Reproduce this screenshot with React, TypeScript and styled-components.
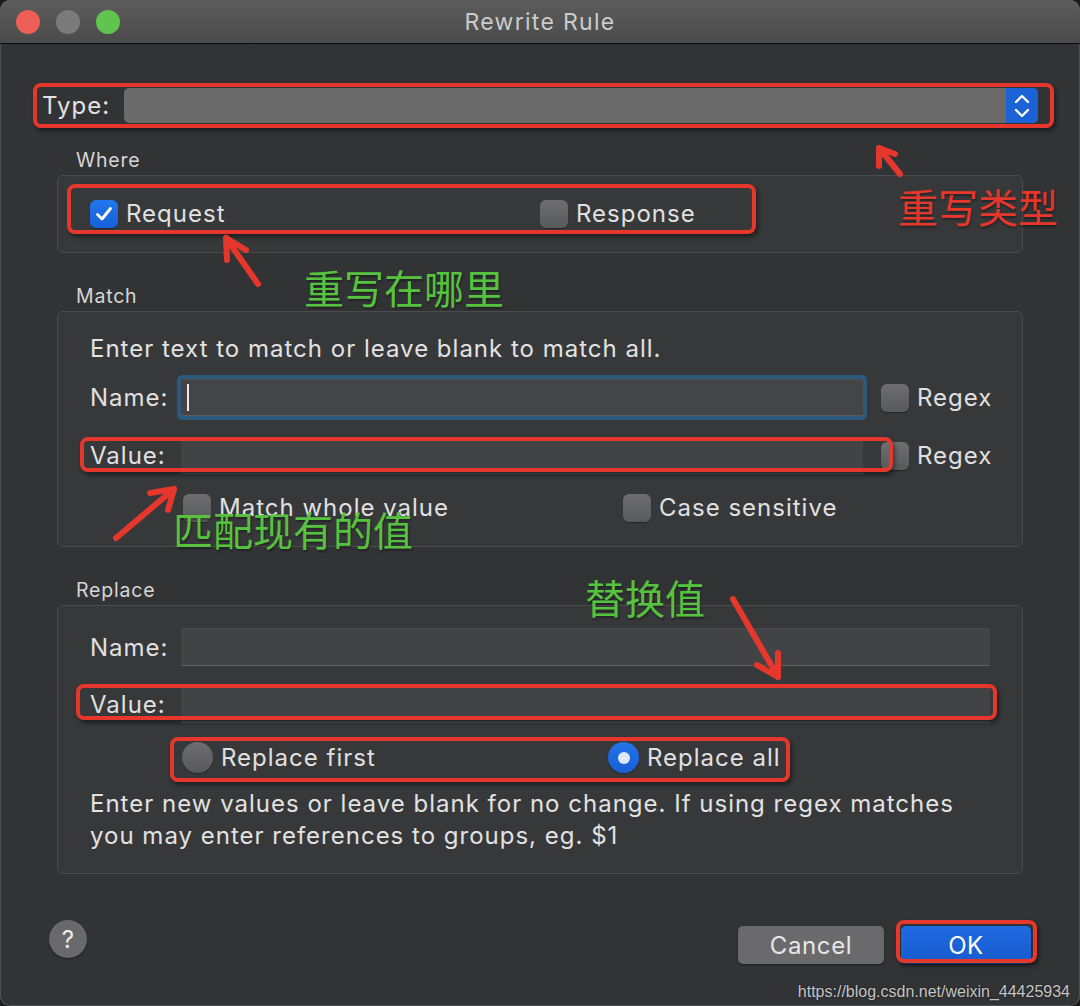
import React from "react";
import styled, { createGlobalStyle } from "styled-components";

const UI_FONT = `Inter, "Noto Sans", "Liberation Sans", sans-serif`;
const CJK_FONT = `"Noto Sans CJK SC", "Noto Sans", sans-serif`;

const GlobalStyle = createGlobalStyle`
  html, body { margin: 0; padding: 0; background: #1b1b1c; }
  #root { width: 1080px; height: 1006px; }
  *, *::before, *::after { box-sizing: border-box; }
`;

const Window = styled.div`
  position: relative;
  width: 1080px;
  height: 1006px;
  background: #323335;
  border-radius: 10px;
  overflow: hidden;
  display: flex;
  flex-direction: column;
  font-family: ${UI_FONT};
  letter-spacing: 1px;
  color: #dedede;
  box-shadow: inset 0 0 0 1px #505052;
`;

const TitleBar = styled.div`
  flex: none;
  height: 44px;
  display: grid;
  grid-template-columns: 1fr auto 1fr;
  align-items: center;
  padding: 0 16px;
  background: linear-gradient(#5c5c5c, #4b4b4b);
  border-bottom: 1px solid #0e0e0e;
`;

const Lights = styled.div`
  display: flex;
  gap: 16px;
`;

const Light = styled.span<{ $c: string }>`
  width: 24px;
  height: 24px;
  border-radius: 50%;
  background: ${(p) => p.$c};
`;

const Title = styled.div`
  font-size: 23px;
  letter-spacing: 1.3px;
  color: #cbcbcb;
`;

const Content = styled.div`
  flex: 1;
  display: flex;
  flex-direction: column;
  padding: 44px 42px 0;
`;

const TypeRow = styled.div`
  display: flex;
  align-items: center;
  height: 35px;
`;

const TypeLabel = styled.div`
  width: 82px;
  font-size: 24px;
  color: #e2e2e2;
`;

const Select = styled.div`
  flex: 1;
  height: 35px;
  border-radius: 5px;
  background: #6a6a6b;
  display: flex;
  justify-content: flex-end;
  overflow: hidden;
`;

const Stepper = styled.div`
  width: 32px;
  height: 100%;
  background: #1b62d6;
  display: flex;
  align-items: center;
  justify-content: center;
`;

const GroupTitle = styled.div<{ $mt: number }>`
  margin: ${(p) => p.$mt}px 0 4px 34px;
  font-size: 19.5px;
  letter-spacing: 0.8px;
  line-height: 22px;
  color: #d6d6d6;
`;

const GroupBox = styled.div<{ $pt: number; $pb: number }>`
  margin: 0 15px;
  padding: ${(p) => p.$pt}px 32px ${(p) => p.$pb}px;
  background: #37383a;
  border: 1px solid #4b4c4e;
  border-radius: 6px;
  display: flex;
  flex-direction: column;
`;

const OptionRow = styled.div<{ $indent?: number; $mt?: number }>`
  display: flex;
  align-items: center;
  padding-left: ${(p) => p.$indent ?? 0}px;
  margin-top: ${(p) => p.$mt ?? 0}px;
`;

const Option = styled.label<{ $w?: number }>`
  display: flex;
  align-items: center;
  gap: 8px;
  flex: none;
  width: ${(p) => (p.$w ? `${p.$w}px` : "auto")};
  font-size: 24px;
  line-height: 28px;
  color: #e0e0e0;
`;

const Box = styled.span<{ $checked?: boolean }>`
  width: 28px;
  height: 28px;
  flex: none;
  border-radius: 6px;
  display: flex;
  align-items: center;
  justify-content: center;
  background: ${(p) =>
    p.$checked ? "linear-gradient(#2277ee, #1760d6)" : "linear-gradient(#6e6e70, #58595b)"};
  box-shadow: 0 1px 1px rgba(0, 0, 0, 0.35);
`;

const Radio = styled.span<{ $checked?: boolean }>`
  width: 31px;
  height: 31px;
  flex: none;
  border-radius: 50%;
  display: flex;
  align-items: center;
  justify-content: center;
  background: ${(p) =>
    p.$checked ? "linear-gradient(#2273ea, #1760d6)" : "linear-gradient(#6e6e70, #58595b)"};
  box-shadow: 0 1px 1px rgba(0, 0, 0, 0.35);
`;

const Dot = styled.span`
  width: 12px;
  height: 12px;
  border-radius: 50%;
  background: #dfe8fb;
`;

const Hint = styled.div`
  font-size: 24px;
  line-height: 28px;
  color: #e2e2e2;
`;

const Fields = styled.div<{ $mt: number; $gap: number }>`
  display: flex;
  flex-direction: column;
  gap: ${(p) => p.$gap}px;
  margin-top: ${(p) => p.$mt}px;
`;

const FieldRow = styled.div`
  display: flex;
  align-items: center;
`;

const FieldLabel = styled.div`
  width: 91px;
  flex: none;
  font-size: 24px;
  color: #e0e0e0;
`;

const Input = styled.div<{ $h: number; $focused?: boolean }>`
  flex: 1;
  height: ${(p) => p.$h}px;
  display: flex;
  align-items: center;
  background: #424345;
  border-top: 1px solid #4a4b4d;
  border-bottom: 1px solid #5b5c5e;
  ${(p) =>
    p.$focused
      ? `box-shadow: 0 0 0 4px #2c5a7c; border-radius: 2px; background: #444547;`
      : ""}
`;

const Caret = styled.span`
  width: 2px;
  height: 27px;
  margin-left: 6px;
  background: #e8e8e8;
`;

const RegexOption = styled(Option)`
  width: 109px;
  margin-left: 18px;
`;

const Description = styled.div`
  margin-top: 15px;
  font-size: 24px;
  line-height: 32px;
  color: #e2e2e2;
  white-space: nowrap;
`;

const Footer = styled.div`
  display: flex;
  justify-content: space-between;
  align-items: flex-start;
  margin-top: 46px;
  padding: 0 7px;
`;

const HelpButton = styled.div`
  width: 38px;
  height: 38px;
  border-radius: 50%;
  background: #69696b;
  display: flex;
  align-items: center;
  justify-content: center;
  font-size: 24px;
  letter-spacing: 0;
  color: #ececec;
  box-shadow: 0 1px 2px rgba(0, 0, 0, 0.4);
`;

const Buttons = styled.div`
  display: flex;
  gap: 17px;
  margin-top: 6px;
`;

const Button = styled.div<{ $primary?: boolean }>`
  height: 38px;
  width: ${(p) => (p.$primary ? 130 : 146)}px;
  border-radius: 5px;
  display: flex;
  align-items: center;
  justify-content: center;
  font-size: 24px;
  letter-spacing: 0.6px;
  color: ${(p) => (p.$primary ? "#ffffff" : "#e6e6e6")};
  background: ${(p) => (p.$primary ? "linear-gradient(#1f6ae2, #175bcc)" : "#6a6a6c")};
  box-shadow: 0 1px 2px rgba(0, 0, 0, 0.45);
`;

const Watermark = styled.div`
  position: absolute;
  right: 10px;
  bottom: 5px;
  font-family: "Liberation Sans", Arial, sans-serif;
  font-size: 16px;
  letter-spacing: 0;
  color: #c4c4c4;
  text-shadow: 0 0 2px rgba(0, 0, 0, 0.6);
`;

/* ---------- annotation overlay (drawn on top of the screenshot) ---------- */

const Overlay = styled.div`
  position: absolute;
  inset: 0;
  pointer-events: none;
`;

const Mark = styled.div<{ $x: number; $y: number; $w: number; $h: number }>`
  position: absolute;
  left: ${(p) => p.$x}px;
  top: ${(p) => p.$y}px;
  width: ${(p) => p.$w}px;
  height: ${(p) => p.$h}px;
  border: 4px solid #e5372b;
  border-radius: 8px;
  box-shadow: 2px 3px 4px rgba(0, 0, 0, 0.45);
`;

const Note = styled.div<{ $x: number; $y: number; $c: string }>`
  position: absolute;
  left: ${(p) => p.$x}px;
  top: ${(p) => p.$y}px;
  font-family: ${CJK_FONT};
  font-size: 40px;
  letter-spacing: 0;
  line-height: 1;
  white-space: nowrap;
  color: ${(p) => p.$c};
  text-shadow: 1px 2px 2px rgba(0, 0, 0, 0.35);
`;

const ArrowLayer = styled.svg`
  position: absolute;
  inset: 0;
  overflow: visible;
`;

type ArrowProps = { tail: [number, number]; tip: [number, number]; a: [number, number]; b: [number, number] };

const Arrow = ({ tail, tip, a, b }: ArrowProps) => (
  <g stroke="#e5372b" strokeWidth={6} strokeLinecap="round" strokeLinejoin="round" fill="none">
    <line x1={tail[0]} y1={tail[1]} x2={tip[0]} y2={tip[1]} />
    <polyline points={`${a[0]},${a[1]} ${tip[0]},${tip[1]} ${b[0]},${b[1]}`} />
  </g>
);

const RED = "#e5372b";
const GREEN = "#57c23f";

export default function App() {
  return (
    <>
      <GlobalStyle />
      <Window>
        <TitleBar>
          <Lights>
            <Light $c="#ee5f57" />
            <Light $c="#7b7b7c" />
            <Light $c="#60c44f" />
          </Lights>
          <Title>Rewrite Rule</Title>
          <span />
        </TitleBar>

        <Content>
          <TypeRow>
            <TypeLabel>Type:</TypeLabel>
            <Select>
              <Stepper>
                <svg width="18" height="26" viewBox="0 0 18 26" fill="none">
                  <polyline points="3,9 9,3 15,9" stroke="#fff" strokeWidth="2.4" strokeLinecap="round" strokeLinejoin="round" />
                  <polyline points="3,17 9,23 15,17" stroke="#fff" strokeWidth="2.4" strokeLinecap="round" strokeLinejoin="round" />
                </svg>
              </Stepper>
            </Select>
          </TypeRow>

          <GroupTitle $mt={26}>Where</GroupTitle>
          <GroupBox $pt={24} $pb={24}>
            <OptionRow $indent={0}>
              <Option $w={450}>
                <Box $checked>
                  <svg width="18" height="16" viewBox="0 0 18 16" fill="none">
                    <polyline points="2.5,8.5 7,13 15.5,2.5" stroke="#fff" strokeWidth="2.8" strokeLinecap="round" strokeLinejoin="round" />
                  </svg>
                </Box>
                Request
              </Option>
              <Option>
                <Box />
                Response
              </Option>
            </OptionRow>
          </GroupBox>

          <GroupTitle $mt={32}>Match</GroupTitle>
          <GroupBox $pt={23} $pb={24}>
            <Hint>Enter text to match or leave blank to match all.</Hint>
            <Fields $mt={16} $gap={21}>
              <FieldRow>
                <FieldLabel>Name:</FieldLabel>
                <Input $h={37} $focused>
                  <Caret />
                </Input>
                <RegexOption>
                  <Box />
                  Regex
                </RegexOption>
              </FieldRow>
              <FieldRow>
                <FieldLabel>Value:</FieldLabel>
                <Input $h={37} />
                <RegexOption>
                  <Box />
                  Regex
                </RegexOption>
              </FieldRow>
            </Fields>
            <OptionRow $indent={93} $mt={20}>
              <Option $w={440}>
                <Box />
                Match whole value
              </Option>
              <Option>
                <Box />
                Case sensitive
              </Option>
            </OptionRow>
          </GroupBox>

          <GroupTitle $mt={32}>Replace</GroupTitle>
          <GroupBox $pt={22} $pb={21}>
            <Fields $mt={0} $gap={19}>
              <FieldRow>
                <FieldLabel>Name:</FieldLabel>
                <Input $h={38} />
              </FieldRow>
              <FieldRow>
                <FieldLabel>Value:</FieldLabel>
                <Input $h={38} />
              </FieldRow>
            </Fields>
            <OptionRow $indent={92} $mt={19}>
              <Option $w={426}>
                <Radio />
                Replace first
              </Option>
              <Option>
                <Radio $checked>
                  <Dot />
                </Radio>
                Replace all
              </Option>
            </OptionRow>
            <Description>
              Enter new values or leave blank for no change. If using regex matches
              <br />
              you may enter references to groups, eg. $1
            </Description>
          </GroupBox>

          <Footer>
            <HelpButton>?</HelpButton>
            <Buttons>
              <Button>Cancel</Button>
              <Button $primary>OK</Button>
            </Buttons>
          </Footer>
        </Content>

        <Watermark>https://blog.csdn.net/weixin_44425934</Watermark>

        <Overlay>
          <Mark $x={33} $y={83} $w={1021} $h={45} />
          <Mark $x={67} $y={184} $w={689} $h={50} />
          <Mark $x={80} $y={437} $w={813} $h={35} />
          <Mark $x={76} $y={684} $w={921} $h={36} />
          <Mark $x={170} $y={737} $w={620} $h={45} />
          <Mark $x={896} $y={920} $w={141} $h={43} />

          <Note $x={898} $y={186} $c={RED}>重写类型</Note>
          <Note $x={304} $y={267} $c={GREEN}>重写在哪里</Note>
          <Note $x={173} $y={509} $c={GREEN}>匹配现有的值</Note>
          <Note $x={585} $y={577} $c={GREEN}>替换值</Note>

          <ArrowLayer width="1080" height="1006" viewBox="0 0 1080 1006">
            <Arrow tail={[900, 174]} tip={[879, 148]} a={[895, 154]} b={[879, 166]} />
            <Arrow tail={[258, 284]} tip={[226, 238]} a={[246, 250]} b={[227, 260]} />
            <Arrow tail={[116, 538]} tip={[174, 489]} a={[150, 493]} b={[168, 510]} />
            <Arrow tail={[733, 599]} tip={[778, 677]} a={[778, 653]} b={[757, 665]} />
          </ArrowLayer>
        </Overlay>
      </Window>
    </>
  );
}
